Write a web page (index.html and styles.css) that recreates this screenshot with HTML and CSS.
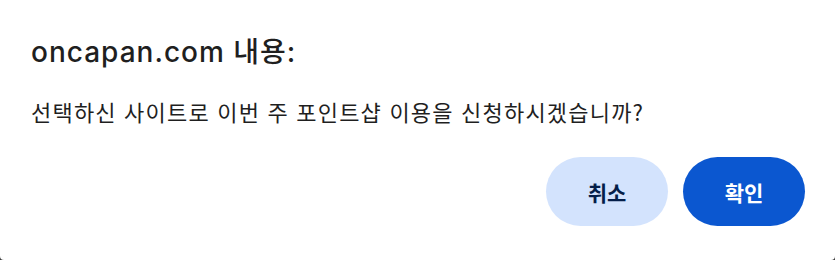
FILE: index.html
```html
<!DOCTYPE html>
<html lang="ko">
<head>
  <meta charset="UTF-8">
  <meta name="viewport" content="width=device-width, initial-scale=1.0">
  <title>oncapan.com 내용</title>
  <link rel="stylesheet" href="styles.css">
</head>
<body>

  <div class="dialog">
    <h1 class="dialog-title">oncapan.com 내용:</h1>
    <p class="dialog-message">선택하신 사이트로 이번 주 포인트샵 이용을 신청하시겠습니까?</p>

    <div class="dialog-buttons">
      <button class="btn btn-cancel">취소</button>
      <button class="btn btn-ok">확인</button>
    </div>
  </div>

</body>
</html>
```

FILE: styles.css
```css
body {
  margin: 0;
  background-color: #3c3c3c;
  font-family: 'Inter', 'Noto Sans CJK KR', sans-serif;
}

.dialog {
  background-color: #fff;
  width: 835px;
  height: 260px;
  box-sizing: border-box;
  padding: 32px 30px 0 31px;
  border-radius: 0 0 4px 4px;
  display: flex;
  flex-direction: column;
}

.dialog-title {
  margin: 0;
  font-size: 28px;
  font-weight: 500;
  letter-spacing: 1px;
  color: #1f1f1f;
  line-height: 40px;
}

.dialog-message {
  margin: 24px 0 0;
  font-family: 'Noto Sans CJK KR', sans-serif;
  font-size: 22px;
  letter-spacing: 1.2px;
  color: #1f1f1f;
  line-height: 30px;
}

.dialog-buttons {
  display: flex;
  justify-content: flex-end;
  gap: 15px;
  margin-top: 31px;
}

.btn {
  width: 122px;
  height: 69px;
  border: none;
  border-radius: 35px;
  font-family: 'Noto Sans CJK KR', sans-serif;
  font-size: 21px;
  font-weight: bold;
  cursor: pointer;
}

.btn-cancel {
  background-color: #d3e3fd;
  color: #041e49;
}

.btn-ok {
  background-color: #0b57d0;
  color: #fff;
}
```
